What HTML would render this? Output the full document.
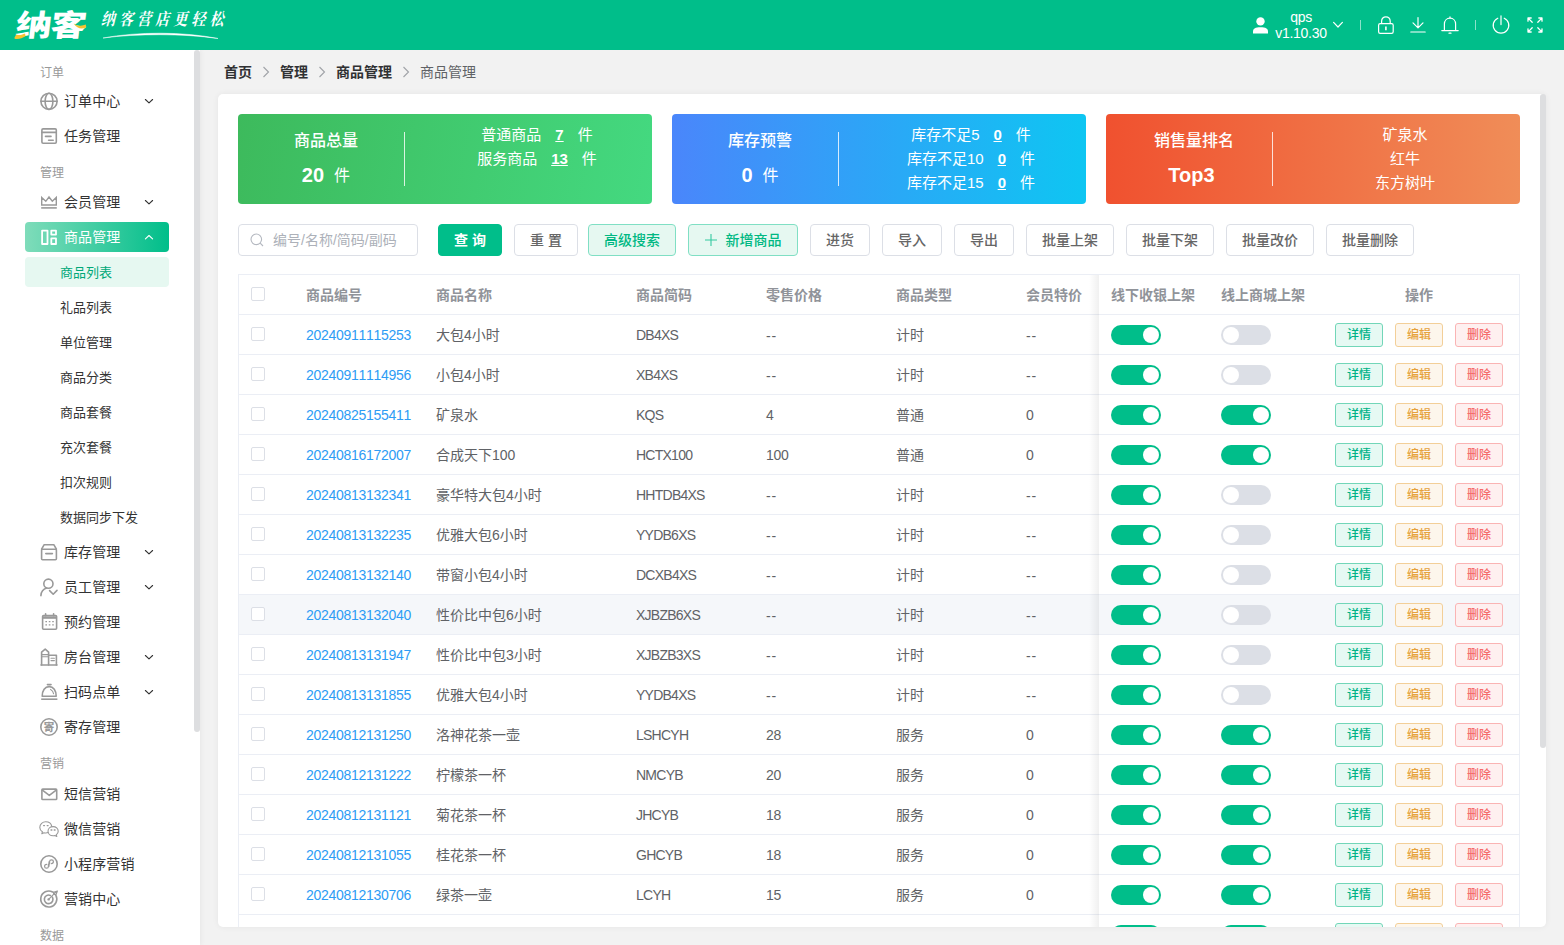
<!DOCTYPE html>
<html lang="zh-CN">
<head>
<meta charset="utf-8">
<title>商品管理</title>
<style>
*{box-sizing:border-box;margin:0;padding:0}
html,body{width:1564px;height:945px;overflow:hidden;background:#f2f2f2}
body{font-family:"Liberation Sans","Noto Sans CJK SC",sans-serif;font-size:14px;color:#606266;position:relative}
a{text-decoration:none;color:inherit}
/* header */
#hd{position:absolute;left:0;top:0;width:1564px;height:50px;background:#00be8a}
#hd .logo{position:absolute;left:14px;top:8px;width:76px;height:34px}
#hd .slogan{position:absolute;left:98px;top:8px;width:134px;height:34px}
#hd .user{position:absolute;left:1271px;top:9px;width:60px;text-align:center;color:#fff;font-size:14px;line-height:16px;letter-spacing:-.3px}
#hd svg.ic{position:absolute;overflow:visible}
#hd .sep{position:absolute;top:20px;width:1px;height:10px;background:rgba(255,255,255,.55)}
#hd .lg{position:absolute;left:2px;top:-4px;font-size:30px;line-height:44px;font-weight:900;color:#fff;letter-spacing:-1px;white-space:nowrap;transform:skewX(-7deg) scaleX(1.2);transform-origin:0 50%}
#hd .slogan span{position:absolute;left:4px;top:0px;font-family:"Liberation Serif","Noto Serif CJK SC",serif;font-size:14px;line-height:24px;color:#fff;font-weight:700;white-space:nowrap;letter-spacing:4.1px;transform:skewX(-14deg) scaleY(1.2);transform-origin:0 50%}
/* sidebar */
#sb{position:absolute;left:0;top:50px;width:200px;height:895px;background:#fff;box-shadow:0 0 6px rgba(0,0,0,.07);clip-path:inset(0 -10px 0 0)}
#sbbar{position:absolute;left:194px;top:50px;width:6px;height:682px;background:#dddee0;border-radius:3px}
#sb .grp{position:absolute;left:40px;font-size:12px;color:#999;line-height:16px;height:16px;margin-top:1px}
#sb .it{position:absolute;left:25px;width:144px;height:30px;border-radius:4px;line-height:30px;font-size:14px;color:#333;letter-spacing:.1px}
#sb .it span{position:absolute;left:39px;top:0;white-space:nowrap}
#sb .it svg.mi{position:absolute;left:15px;top:6px;width:18px;height:18px;overflow:visible}
#sb .it svg.ar{position:absolute;left:120px;top:11px;width:8px;height:8px;overflow:visible}
#sb .it.act{background:linear-gradient(90deg,#7fdcba 0%,#00be8a 100%);color:#fff}
#sb .sub{position:absolute;left:25px;width:144px;height:30px;border-radius:4px;line-height:31px;font-size:13px;color:#333;padding-left:35px;white-space:nowrap}
#sb .sub.on{background:#e6f8f1;color:#00a878}
/* breadcrumb */
#bc{position:absolute;left:224px;top:62px;height:20px;line-height:20px;font-size:14px;color:#303133;white-space:nowrap}
#bc b{font-weight:700;color:#303133}
#bc i{display:inline-block;width:28px;text-align:center;font-style:normal;color:#a0a3a8;position:relative;top:0}
#bc i svg{width:8px;height:12px;vertical-align:-1px}
#bc span{color:#606266}
/* main card */
#card{position:absolute;left:218px;top:94px;width:1328px;height:833px;background:#fff;border-radius:5px;box-shadow:0 0 6px rgba(0,0,0,.06);overflow:hidden}
#cbar{position:absolute;left:1540px;top:94px;width:6px;height:654px;background:#dddee0;border-radius:3px}
.st{position:absolute;top:20px;width:414px;height:90px;border-radius:4px;color:#fff}
.st .l{position:absolute;left:0;top:0;width:166px;text-align:center}
.st .l .t{position:absolute;left:0;width:176px;top:17px;font-size:16px;line-height:20px;font-weight:500}
.st .l .n{position:absolute;left:0;width:176px;top:49px;font-size:16px;line-height:24px}
.st .l .n b{font-size:20px;font-weight:700;margin-right:10px;vertical-align:-1px}
.st .dv{position:absolute;left:166px;top:18px;width:1px;height:54px;background:rgba(255,255,255,.8)}
.st .r{position:absolute;left:180px;top:9px;width:238px;text-align:center;font-size:15px;line-height:24px}
.st .r u{margin:0 14px 0 14px;font-weight:700}
/* toolbar */
.tb{position:absolute;top:130px;height:32px;border:1px solid #dcdfe6;border-radius:4px;background:#fff;font-size:14px;line-height:30px;text-align:center;color:#666;font-weight:500;white-space:nowrap}
.tb.p{background:#00be8a;border-color:#00be8a;color:#fff;font-weight:700}
.tb.g{background:#e6f8f1;border-color:#80dfc4;color:#00b883}
#inp{position:absolute;left:20px;top:130px;width:180px;height:32px;border:1px solid #dcdfe6;border-radius:4px;background:#fff;line-height:30px;font-size:14px;color:#adb1b9;padding-left:34px;white-space:nowrap}
#inp svg{position:absolute;left:11px;top:8px;width:14px;height:14px;overflow:visible}
/* table */
#tbl{position:absolute;left:20px;top:180px;width:1282px;height:700px;border:1px solid #ebeef5;border-bottom:0}
#tbl .r{position:absolute;left:0;top:0;width:1280px;height:40px;border-bottom:1px solid #ebeef5;line-height:41px;font-size:14px;color:#606266;background:#fff}
#tbl .r.hv{background:#f5f7fa}
#tbl .r.h{color:#909399;font-weight:700}
#tbl .r span,#tbl .r a{position:absolute;top:0;white-space:nowrap}
#tbl .r a{color:#2d9cf5;font-kerning:none;letter-spacing:-.29px}
#tbl .r .c{letter-spacing:-.75px}
#tbl .r .d{letter-spacing:-.3px}
#tbl .r .dd{letter-spacing:.9px;margin-top:1px}
#tbl .ck{position:absolute;left:12px;top:12px;width:14px;height:14px;border:1px solid #dcdfe6;border-radius:2px;background:#fff}
#tbl .sw{position:absolute;top:10px;width:50px;height:20px;border-radius:10px;background:#dcdfe6}
#tbl .sw:after{content:"";position:absolute;left:2px;top:2px;width:16px;height:16px;border-radius:8px;background:#fff}
#tbl .sw.on{background:#00be8a}
#tbl .sw.on:after{left:32px}
#tbl em{position:absolute;top:8px;width:48px;height:24px;border:1px solid;border-radius:3px;font-style:normal;font-size:12px;line-height:23px;text-align:center;font-weight:500}
#tbl .b1{left:1096px;color:#00b386;background:#e6f9f3;border-color:#72d6b8}
#tbl .b2{left:1156px;color:#e6a23c;background:#fdf6ec;border-color:#f3cf98}
#tbl .b3{left:1216px;color:#f56c6c;background:#fef0f0;border-color:#fab4b4}
#fx{position:absolute;left:850px;top:0;width:10px;height:700px;background:linear-gradient(90deg,rgba(0,0,0,0),rgba(0,0,0,.06))}
</style>
</head>
<body>
<div id="hd">
<div class="logo"><span class="lg">纳客</span><svg viewBox="0 0 76 34" style="position:absolute;left:0;top:0;width:76px;height:34px;overflow:visible"><path d="M0.6 29.2L2.4 26.6C5.4 27.6 8.4 27 11 25.6L11.6 28C8.2 30.6 4.2 31.6 0.6 30.8Z" fill="#f5c431"/><path d="M59.6 15.2C63.4 18.2 67.6 18.4 71.8 16.6L72.2 19.2C68 21.6 63.2 21 59.6 15.2Z" fill="#f5c431"/></svg></div>
<div class="slogan"><span>纳客营店更轻松</span><svg viewBox="0 0 134 34" style="position:absolute;left:0;top:0;width:134px;height:34px;overflow:visible"><path d="M5 30C40 23.5 85 23.5 120 30.5C85 25.5 40 25.5 5 30Z" fill="#fff" stroke="#fff" stroke-width=".5"/></svg></div>
<svg class="ic" style="left:1252px;top:16px;width:17px;height:18px" viewBox="0 0 17 18"><circle cx="8.5" cy="5.4" r="4.2" fill="#fff"/><path d="M1 17.6V15.4C1 12.6 3.4 11.2 8.5 11.2C13.6 11.2 16 12.6 16 15.4V17.6Z" fill="#fff"/></svg>
<div class="user">qps<br>v1.10.30</div>
<svg class="ic" style="left:1333px;top:21px;width:10px;height:8px" viewBox="0 0 10 8" fill="none" stroke="#fff" stroke-width="1.2" stroke-linecap="round" stroke-linejoin="round"><path d="M0.6 1.4L5 6L9.4 1.4"/></svg>
<div class="sep" style="left:1360px"></div>
<svg class="ic" style="left:1377px;top:16px;width:18px;height:18px" viewBox="0 0 18 18" fill="none" stroke="#fff" stroke-width="1.2" stroke-linejoin="round"><rect x="1.6" y="7.6" width="14.6" height="9.8" rx="1.6"/><path d="M4.6 7.4V5.2C4.6 2.6 6.4 0.8 8.9 0.8C11.4 0.8 13.2 2.6 13.2 5.2V7.4"/><path d="M8.9 10.6V14.2" stroke-width="1.6"/></svg>
<svg class="ic" style="left:1410px;top:16px;width:16px;height:18px" viewBox="0 0 16 18" fill="none" stroke="#fff" stroke-width="1.2" stroke-linecap="round" stroke-linejoin="round"><path d="M8 1.6V11.6M3 6.8L8 11.8L13 6.8M0.8 16H15.2"/></svg>
<svg class="ic" style="left:1441px;top:16px;width:18px;height:19px" viewBox="0 0 18 19" fill="none" stroke="#fff" stroke-width="1.2" stroke-linecap="round" stroke-linejoin="round"><path d="M3.4 14.4V8C3.4 4.6 5.8 2.2 9 2.2C12.2 2.2 14.6 4.6 14.6 8V14.4"/><path d="M0.8 14.6H17.2M9 0.8V2M8 17.2H10"/></svg>
<div class="sep" style="left:1475px"></div>
<svg class="ic" style="left:1492px;top:15px;width:18px;height:19px" viewBox="0 0 18 19" fill="none" stroke="#fff" stroke-width="1.2" stroke-linecap="round"><path d="M5.8 3.2A7.8 7.8 0 1 0 12.2 3.2M9 0.8V9.6"/></svg>
<svg class="ic" style="left:1527px;top:17px;width:16px;height:16px" viewBox="0 0 16 16" fill="none" stroke="#fff" stroke-width="1.3" stroke-linecap="round" stroke-linejoin="round"><path d="M1 4.2V1H4.2M1.4 1.4L5.2 5.2M11.8 1H15V4.2M14.6 1.4L10.8 5.2M1 11.8V15H4.2M1.4 14.6L5.2 10.8M15 11.8V15H11.8M14.6 14.6L10.8 10.8"/></svg>
</div>
<div id="sb">
<div class="grp" style="top:14px">订单</div>
<div class="it" style="top:36px"><svg class="mi" viewBox="0 0 18 18" fill="none" stroke="#999" stroke-width="1.6" stroke-linecap="round" stroke-linejoin="round"><circle cx="9" cy="9.3" r="8.1"/><ellipse cx="9" cy="9.3" rx="3.9" ry="8.1"/><path d="M1 9.3H17"/></svg><span>订单中心</span><svg class="ar" viewBox="0 0 8 8" fill="none" stroke="#333" stroke-width="1.1" stroke-linecap="round" stroke-linejoin="round"><path d="M0.4 2.5L4 5.9L7.6 2.5"/></svg></div>
<div class="it" style="top:71px"><svg class="mi" viewBox="0 0 18 18" fill="none" stroke="#999" stroke-width="1.6" stroke-linecap="round" stroke-linejoin="round"><rect x="1.9" y="1.9" width="14.4" height="14.4" rx="1.2"/><path d="M2 5.4H16.2M5.5 9.4H11M8.6 13.2H13.2"/></svg><span>任务管理</span></div>
<div class="grp" style="top:114px">管理</div>
<div class="it" style="top:137px"><svg class="mi" viewBox="0 0 18 18" fill="none" stroke="#999" stroke-width="1.6" stroke-linecap="round" stroke-linejoin="round"><path d="M1.7 4.4L5.8 8.3L9 4L12.3 8.3L16.3 4.4V12H1.7Z" stroke-linejoin="miter" stroke-width="1.4"/><path d="M1.2 14.9H16.8" stroke-linecap="butt"/></svg><span>会员管理</span><svg class="ar" viewBox="0 0 8 8" fill="none" stroke="#333" stroke-width="1.1" stroke-linecap="round" stroke-linejoin="round"><path d="M0.4 2.5L4 5.9L7.6 2.5"/></svg></div>
<div class="it act" style="top:172px"><svg class="mi" viewBox="0 0 18 18" fill="none" stroke="#fff" stroke-width="1.8" stroke-linecap="round" stroke-linejoin="round"><rect x="2.1" y="2.6" width="5.4" height="13.4"/><rect x="11.3" y="2.6" width="4.7" height="4"/><rect x="11.3" y="10.4" width="4.7" height="5.6"/></svg><span>商品管理</span><svg class="ar" viewBox="0 0 8 8" fill="none" stroke="#fff" stroke-width="1.1" stroke-linecap="round" stroke-linejoin="round"><path d="M0.4 5.9L4 2.5L7.6 5.9"/></svg></div>
<div class="sub on" style="top:207px">商品列表</div>
<div class="sub" style="top:242px">礼品列表</div>
<div class="sub" style="top:277px">单位管理</div>
<div class="sub" style="top:312px">商品分类</div>
<div class="sub" style="top:347px">商品套餐</div>
<div class="sub" style="top:382px">充次套餐</div>
<div class="sub" style="top:417px">扣次规则</div>
<div class="sub" style="top:452px">数据同步下发</div>
<div class="it" style="top:487px"><svg class="mi" viewBox="0 0 18 18" fill="none" stroke="#999" stroke-width="1.6" stroke-linecap="round" stroke-linejoin="round"><path d="M1.6 6.2L4.2 1.7H13.8L16.4 6.2"/><rect x="1.6" y="6.2" width="14.8" height="10.6" rx="1"/><path d="M5.8 10.6H12.4"/></svg><span>库存管理</span><svg class="ar" viewBox="0 0 8 8" fill="none" stroke="#333" stroke-width="1.1" stroke-linecap="round" stroke-linejoin="round"><path d="M0.4 2.5L4 5.9L7.6 2.5"/></svg></div>
<div class="it" style="top:522px"><svg class="mi" viewBox="0 0 18 18" fill="none" stroke="#999" stroke-width="1.6" stroke-linecap="round" stroke-linejoin="round"><circle cx="8.4" cy="5.7" r="4.6"/><path d="M0.9 17.6C1.2 13.6 3.4 10.9 6.6 10"/><path d="M9.6 12.6L13.2 16.2L17 12.4"/></svg><span>员工管理</span><svg class="ar" viewBox="0 0 8 8" fill="none" stroke="#333" stroke-width="1.1" stroke-linecap="round" stroke-linejoin="round"><path d="M0.4 2.5L4 5.9L7.6 2.5"/></svg></div>
<div class="it" style="top:557px"><svg class="mi" viewBox="0 0 18 18" fill="none" stroke="#999" stroke-width="1.6" stroke-linecap="round" stroke-linejoin="round"><rect x="2.6" y="2.6" width="14" height="13.6" rx="1"/><path d="M2.6 4.6H16.6" stroke-width="2.4" stroke-linecap="butt"/><path d="M5.6 0.8V2.6M13.6 0.8V2.6"/><path d="M5.4 8.6h1.6M8.8 8.6h1.6M12.2 8.6h1.6M5.4 11.8h1.6M8.8 11.8h1.6M12.2 11.8h1.6" stroke-width="1.3" stroke-linecap="butt"/></svg><span>预约管理</span></div>
<div class="it" style="top:592px"><svg class="mi" viewBox="0 0 18 18" fill="none" stroke="#999" stroke-width="1.6" stroke-linecap="round" stroke-linejoin="round"><path d="M1.6 17V4.2L5.2 1.2L8.6 4.2V17"/><path d="M8.6 7.2H16.4V17"/><path d="M1 17H17"/><path d="M2 6.6H8M2 8.8H8M11 10.2H14.4M11 12.6H14.4" stroke-width="1.1"/></svg><span>房台管理</span><svg class="ar" viewBox="0 0 8 8" fill="none" stroke="#333" stroke-width="1.1" stroke-linecap="round" stroke-linejoin="round"><path d="M0.4 2.5L4 5.9L7.6 2.5"/></svg></div>
<div class="it" style="top:627px"><svg class="mi" viewBox="0 0 18 18" fill="none" stroke="#999" stroke-width="1.6" stroke-linecap="round" stroke-linejoin="round"><path d="M2.2 13.2C2.2 7.6 5 3.6 9.2 3.6C13.4 3.6 16.2 7.6 16.2 13.2Z"/><path d="M7.4 1.6H11"/><path d="M1.2 16.2H17.4" stroke-linecap="butt"/><path d="M10.6 6.4C12.2 7.2 13.3 8.8 13.6 10.8" stroke-width="1.1"/></svg><span>扫码点单</span><svg class="ar" viewBox="0 0 8 8" fill="none" stroke="#333" stroke-width="1.1" stroke-linecap="round" stroke-linejoin="round"><path d="M0.4 2.5L4 5.9L7.6 2.5"/></svg></div>
<div class="it" style="top:662px"><svg class="mi" viewBox="0 0 18 18" fill="none" stroke="#999" stroke-width="1.6" stroke-linecap="round" stroke-linejoin="round"><circle cx="9" cy="9" r="8.2"/><text x="9" y="12.8" font-size="10.5" font-weight="900" text-anchor="middle" fill="#999" stroke="none" font-family="Noto Sans CJK SC,sans-serif">寄</text></svg><span>寄存管理</span></div>
<div class="grp" style="top:705px">营销</div>
<div class="it" style="top:729px"><svg class="mi" viewBox="0 0 18 18" fill="none" stroke="#999" stroke-width="1.6" stroke-linecap="round" stroke-linejoin="round"><rect x="1.9" y="4.1" width="14.8" height="10.4" rx="0.8"/><path d="M2.4 5.2L9.3 10.4L16.2 5.2"/></svg><span>短信营销</span></div>
<div class="it" style="top:764px"><svg class="mi" viewBox="0 0 18 18" fill="none" stroke="#999" stroke-width="1.6" stroke-linecap="round" stroke-linejoin="round"><path d="M8.2 12.6C7.4 12.9 6.6 13 5.8 13C5.2 13 4.6 12.9 4 12.7L1.8 13.8L2.4 11.8C0.9 10.8-0.2 9.2-0.2 7.4C-0.2 4.2 2.5 1.8 5.8 1.8C8.8 1.8 11.2 3.7 11.7 6.2" stroke-width="1.1"/><path d="M18.2 11.2C18.2 8.6 15.9 6.6 13.1 6.6C10.3 6.6 8 8.6 8 11.2C8 13.8 10.3 15.8 13.1 15.8C13.7 15.8 14.3 15.7 14.9 15.5L16.8 16.5L16.3 14.8C17.5 13.9 18.2 12.6 18.2 11.2Z" stroke-width="1.1"/><path d="M3.6 5.6h.9M7.2 5.6h.9M11 10h.9M14.2 10h.9" stroke-width="1.3"/></svg><span>微信营销</span></div>
<div class="it" style="top:799px"><svg class="mi" viewBox="0 0 18 18" fill="none" stroke="#999" stroke-width="1.6" stroke-linecap="round" stroke-linejoin="round"><circle cx="9" cy="9" r="8.2"/><path d="M9.6 6.6C9.6 5.4 10.6 4.8 11.5 4.8C12.6 4.8 13.4 5.6 13.4 6.6C13.4 7.8 12.4 8.6 11.4 8.6M8.4 11.4C8.4 12.6 7.4 13.2 6.5 13.2C5.4 13.2 4.6 12.4 4.6 11.4C4.6 10.2 5.6 9.4 6.6 9.4M9.6 6.6V9M8.4 11.4V9" stroke-width="1.2" transform="translate(0,0)"/><path d="M9 6.8V11.2" stroke-width="1.2"/></svg><span>小程序营销</span></div>
<div class="it" style="top:834px"><svg class="mi" viewBox="0 0 18 18" fill="none" stroke="#999" stroke-width="1.6" stroke-linecap="round" stroke-linejoin="round"><path d="M15.8 5.2A8 8 0 1 1 12.6 2"/><path d="M12.4 7.2A4.3 4.3 0 1 1 10.4 5.4"/><circle cx="8.6" cy="9.4" r="1.2" fill="#999" stroke="none"/><path d="M8.6 9.4L15.8 2.2M13.4 2.2L13.8 4.4L16 4.6L17.4 1L13.4 2.2" stroke-width="1.2"/></svg><span>营销中心</span></div>
<div class="grp" style="top:877px">数据</div>
</div>
<div id="sbbar"></div>
<div id="bc"><b>首页</b><i><svg viewBox="0 0 8 12"><path d="M1.5 1 L6.5 6 L1.5 11" fill="none" stroke="#a0a3a8" stroke-width="1.1"/></svg></i><b>管理</b><i><svg viewBox="0 0 8 12"><path d="M1.5 1 L6.5 6 L1.5 11" fill="none" stroke="#a0a3a8" stroke-width="1.1"/></svg></i><b>商品管理</b><i><svg viewBox="0 0 8 12"><path d="M1.5 1 L6.5 6 L1.5 11" fill="none" stroke="#a0a3a8" stroke-width="1.1"/></svg></i><span>商品管理</span></div>
<div id="card">
<div class="st" style="left:20px;background:linear-gradient(100deg,#3dba5c 0%,#44d980 100%)">
<div class="l"><div class="t">商品总量</div><div class="n"><b>20</b>件</div></div><div class="dv"></div>
<div class="r"><div>普通商品<u>7</u>件</div><div>服务商品<u>13</u>件</div></div></div>
<div class="st" style="left:454px;background:linear-gradient(90deg,#4a86fb 0%,#0ec6f2 100%)">
<div class="l"><div class="t">库存预警</div><div class="n"><b>0</b>件</div></div><div class="dv"></div>
<div class="r"><div>库存不足5<u>0</u>件</div><div>库存不足10<u>0</u>件</div><div>库存不足15<u>0</u>件</div></div></div>
<div class="st" style="left:888px;background:linear-gradient(90deg,#f0512f 0%,#f08d58 100%)">
<div class="l"><div class="t">销售量排名</div><div class="n"><b style="margin-right:5px">Top3</b></div></div><div class="dv"></div>
<div class="r"><div>矿泉水</div><div>红牛</div><div>东方树叶</div></div></div>
<div id="inp"><svg viewBox="0 0 14 14"><circle cx="6.3" cy="6.3" r="5.3" fill="none" stroke="#b4b8c0" stroke-width="1.1"/><path d="M10.2 10.2 L13 13" stroke="#b4b8c0" stroke-width="1.1" fill="none"/></svg>编号/名称/简码/副码</div>
<div class="tb p" style="left:220px;width:64px">查 询</div>
<div class="tb" style="left:296px;width:64px;font-weight:500">重 置</div>
<div class="tb g" style="left:370px;width:88px">高级搜索</div>
<div class="tb g" style="left:470px;width:110px"><svg viewBox="0 0 12 12" style="width:12px;height:12px;margin-right:9px;vertical-align:-1px"><path d="M6 0V12M0 6H12" stroke="#33c9a0" stroke-width="1.1" fill="none"/></svg>新增商品</div>
<div class="tb" style="left:592px;width:60px">进货</div>
<div class="tb" style="left:664px;width:60px">导入</div>
<div class="tb" style="left:736px;width:60px">导出</div>
<div class="tb" style="left:808px;width:88px">批量上架</div>
<div class="tb" style="left:908px;width:88px">批量下架</div>
<div class="tb" style="left:1008px;width:88px">批量改价</div>
<div class="tb" style="left:1108px;width:88px">批量删除</div>
<div id="tbl">
<div class="r h"><i class="ck"></i><span style="left:67px">商品编号</span><span style="left:197px">商品名称</span><span style="left:397px">商品简码</span><span style="left:527px">零售价格</span><span style="left:657px">商品类型</span><span style="left:787px">会员特价</span><span style="left:872px">线下收银上架</span><span style="left:982px">线上商城上架</span><span style="left:1166px">操作</span></div>
<div class="r" style="top:40px"><i class="ck"></i><a style="left:67px">20240911115253</a><span style="left:197px">大包4小时</span><span class="c" style="left:397px">DB4XS</span><span class="dd" style="left:527px">--</span><span style="left:657px">计时</span><span class="dd" style="left:787px">--</span><i class="sw on" style="left:872px"></i><i class="sw" style="left:982px"></i><em class="b1">详情</em><em class="b2">编辑</em><em class="b3">删除</em></div>
<div class="r" style="top:80px"><i class="ck"></i><a style="left:67px">20240911114956</a><span style="left:197px">小包4小时</span><span class="c" style="left:397px">XB4XS</span><span class="dd" style="left:527px">--</span><span style="left:657px">计时</span><span class="dd" style="left:787px">--</span><i class="sw on" style="left:872px"></i><i class="sw" style="left:982px"></i><em class="b1">详情</em><em class="b2">编辑</em><em class="b3">删除</em></div>
<div class="r" style="top:120px"><i class="ck"></i><a style="left:67px">20240825155411</a><span style="left:197px">矿泉水</span><span class="c" style="left:397px">KQS</span><span class="d" style="left:527px">4</span><span style="left:657px">普通</span><span class="d" style="left:787px">0</span><i class="sw on" style="left:872px"></i><i class="sw on" style="left:982px"></i><em class="b1">详情</em><em class="b2">编辑</em><em class="b3">删除</em></div>
<div class="r" style="top:160px"><i class="ck"></i><a style="left:67px">20240816172007</a><span style="left:197px">合成天下100</span><span class="c" style="left:397px">HCTX100</span><span class="d" style="left:527px">100</span><span style="left:657px">普通</span><span class="d" style="left:787px">0</span><i class="sw on" style="left:872px"></i><i class="sw on" style="left:982px"></i><em class="b1">详情</em><em class="b2">编辑</em><em class="b3">删除</em></div>
<div class="r" style="top:200px"><i class="ck"></i><a style="left:67px">20240813132341</a><span style="left:197px">豪华特大包4小时</span><span class="c" style="left:397px">HHTDB4XS</span><span class="dd" style="left:527px">--</span><span style="left:657px">计时</span><span class="dd" style="left:787px">--</span><i class="sw on" style="left:872px"></i><i class="sw" style="left:982px"></i><em class="b1">详情</em><em class="b2">编辑</em><em class="b3">删除</em></div>
<div class="r" style="top:240px"><i class="ck"></i><a style="left:67px">20240813132235</a><span style="left:197px">优雅大包6小时</span><span class="c" style="left:397px">YYDB6XS</span><span class="dd" style="left:527px">--</span><span style="left:657px">计时</span><span class="dd" style="left:787px">--</span><i class="sw on" style="left:872px"></i><i class="sw" style="left:982px"></i><em class="b1">详情</em><em class="b2">编辑</em><em class="b3">删除</em></div>
<div class="r" style="top:280px"><i class="ck"></i><a style="left:67px">20240813132140</a><span style="left:197px">带窗小包4小时</span><span class="c" style="left:397px">DCXB4XS</span><span class="dd" style="left:527px">--</span><span style="left:657px">计时</span><span class="dd" style="left:787px">--</span><i class="sw on" style="left:872px"></i><i class="sw" style="left:982px"></i><em class="b1">详情</em><em class="b2">编辑</em><em class="b3">删除</em></div>
<div class="r hv" style="top:320px"><i class="ck"></i><a style="left:67px">20240813132040</a><span style="left:197px">性价比中包6小时</span><span class="c" style="left:397px">XJBZB6XS</span><span class="dd" style="left:527px">--</span><span style="left:657px">计时</span><span class="dd" style="left:787px">--</span><i class="sw on" style="left:872px"></i><i class="sw" style="left:982px"></i><em class="b1">详情</em><em class="b2">编辑</em><em class="b3">删除</em></div>
<div class="r" style="top:360px"><i class="ck"></i><a style="left:67px">20240813131947</a><span style="left:197px">性价比中包3小时</span><span class="c" style="left:397px">XJBZB3XS</span><span class="dd" style="left:527px">--</span><span style="left:657px">计时</span><span class="dd" style="left:787px">--</span><i class="sw on" style="left:872px"></i><i class="sw" style="left:982px"></i><em class="b1">详情</em><em class="b2">编辑</em><em class="b3">删除</em></div>
<div class="r" style="top:400px"><i class="ck"></i><a style="left:67px">20240813131855</a><span style="left:197px">优雅大包4小时</span><span class="c" style="left:397px">YYDB4XS</span><span class="dd" style="left:527px">--</span><span style="left:657px">计时</span><span class="dd" style="left:787px">--</span><i class="sw on" style="left:872px"></i><i class="sw" style="left:982px"></i><em class="b1">详情</em><em class="b2">编辑</em><em class="b3">删除</em></div>
<div class="r" style="top:440px"><i class="ck"></i><a style="left:67px">20240812131250</a><span style="left:197px">洛神花茶一壶</span><span class="c" style="left:397px">LSHCYH</span><span class="d" style="left:527px">28</span><span style="left:657px">服务</span><span class="d" style="left:787px">0</span><i class="sw on" style="left:872px"></i><i class="sw on" style="left:982px"></i><em class="b1">详情</em><em class="b2">编辑</em><em class="b3">删除</em></div>
<div class="r" style="top:480px"><i class="ck"></i><a style="left:67px">20240812131222</a><span style="left:197px">柠檬茶一杯</span><span class="c" style="left:397px">NMCYB</span><span class="d" style="left:527px">20</span><span style="left:657px">服务</span><span class="d" style="left:787px">0</span><i class="sw on" style="left:872px"></i><i class="sw on" style="left:982px"></i><em class="b1">详情</em><em class="b2">编辑</em><em class="b3">删除</em></div>
<div class="r" style="top:520px"><i class="ck"></i><a style="left:67px">20240812131121</a><span style="left:197px">菊花茶一杯</span><span class="c" style="left:397px">JHCYB</span><span class="d" style="left:527px">18</span><span style="left:657px">服务</span><span class="d" style="left:787px">0</span><i class="sw on" style="left:872px"></i><i class="sw on" style="left:982px"></i><em class="b1">详情</em><em class="b2">编辑</em><em class="b3">删除</em></div>
<div class="r" style="top:560px"><i class="ck"></i><a style="left:67px">20240812131055</a><span style="left:197px">桂花茶一杯</span><span class="c" style="left:397px">GHCYB</span><span class="d" style="left:527px">18</span><span style="left:657px">服务</span><span class="d" style="left:787px">0</span><i class="sw on" style="left:872px"></i><i class="sw on" style="left:982px"></i><em class="b1">详情</em><em class="b2">编辑</em><em class="b3">删除</em></div>
<div class="r" style="top:600px"><i class="ck"></i><a style="left:67px">20240812130706</a><span style="left:197px">绿茶一壶</span><span class="c" style="left:397px">LCYH</span><span class="d" style="left:527px">15</span><span style="left:657px">服务</span><span class="d" style="left:787px">0</span><i class="sw on" style="left:872px"></i><i class="sw on" style="left:982px"></i><em class="b1">详情</em><em class="b2">编辑</em><em class="b3">删除</em></div>
<div class="r" style="top:640px"><i class="ck"></i><a style="left:67px">20240812130642</a><span style="left:197px">红茶一壶</span><span class="c" style="left:397px">HCYH</span><span class="d" style="left:527px">15</span><span style="left:657px">服务</span><span class="d" style="left:787px">0</span><i class="sw on" style="left:872px"></i><i class="sw on" style="left:982px"></i><em class="b1">详情</em><em class="b2">编辑</em><em class="b3">删除</em></div>
<div id="fx"></div>
</div>
</div>
<div id="cbar"></div>
</body>
</html>
